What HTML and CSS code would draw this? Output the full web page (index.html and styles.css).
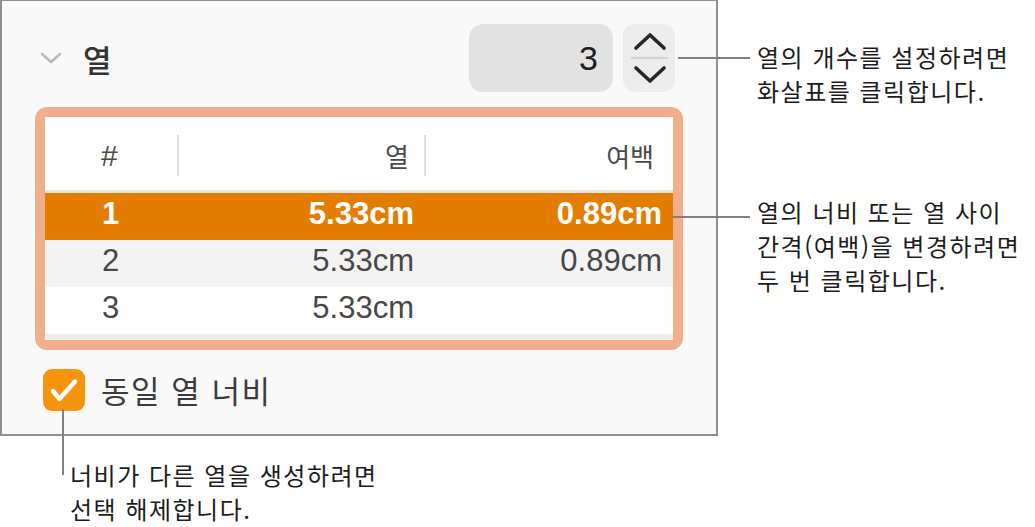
FILE: index.html
```html
<!DOCTYPE html>
<html lang="ko">
<head>
  <meta charset="UTF-8" />
  <meta name="viewport" content="width=device-width, initial-scale=1.0" />
  <title>열 설정</title>
  <link rel="stylesheet" href="styles.css">
</head>
<body>

  <div class="figure">
    <div class="left-col">

      <!-- Columns inspector panel -->
      <section class="panel">
        <div class="panel-head">
          <svg class="disclosure" width="22" height="12" viewBox="0 0 22 12">
            <path d="M2 2 L11 10 L20 2" fill="none" stroke="#b8b8b8" stroke-width="2.4" stroke-linecap="round" stroke-linejoin="round"/>
          </svg>
          <h2 class="panel-title">열</h2>
          <div class="count-field">3</div>
          <div class="stepper">
            <svg width="52" height="68" viewBox="0 0 52 68">
              <path d="M13 24 L27 11 L41 24" fill="none" stroke="#262626" stroke-width="3.6" stroke-linecap="round" stroke-linejoin="round"/>
              <line x1="8" y1="34" x2="45" y2="34" stroke="#d2d2d2" stroke-width="2"/>
              <path d="M13 44 L27 57 L41 44" fill="none" stroke="#262626" stroke-width="3.6" stroke-linecap="round" stroke-linejoin="round"/>
            </svg>
          </div>
        </div>

        <div class="table-frame">
          <div class="col-table">
            <div class="t-head">
              <div class="th th-num"><span>#</span></div>
              <div class="th th-width"><span>열</span></div>
              <div class="th th-gap"><span>여백</span></div>
            </div>
            <div class="t-row selected">
              <div class="td td-num">1</div>
              <div class="td td-width">5.33cm</div>
              <div class="td td-gap">0.89cm</div>
            </div>
            <div class="t-row alt">
              <div class="td td-num">2</div>
              <div class="td td-width">5.33cm</div>
              <div class="td td-gap">0.89cm</div>
            </div>
            <div class="t-row">
              <div class="td td-num">3</div>
              <div class="td td-width">5.33cm</div>
              <div class="td td-gap"></div>
            </div>
            <div class="t-foot"></div>
          </div>
        </div>

        <label class="check-row">
          <span class="checkbox">
            <svg width="42" height="42" viewBox="0 0 42 42">
              <path d="M10 22 L16.5 30 L32 12.5" fill="none" stroke="#fff" stroke-width="4.4" stroke-linecap="round" stroke-linejoin="round"/>
            </svg>
          </span>
          <span class="check-label">동일 열 너비</span>
        </label>
      </section>

      <div class="note note-bottom">
        <span class="leader leader-v"></span>
        <p>너비가 다른 열을 생성하려면<br>선택 해제합니다.</p>
      </div>
    </div>

    <div class="notes">
      <div class="note note-count">
        <span class="leader"></span>
        <p>열의 개수를 설정하려면<br>화살표를 클릭합니다.</p>
      </div>
      <div class="note note-table">
        <span class="leader"></span>
        <p>열의 너비 또는 열 사이<br>간격(여백)을 변경하려면<br>두 번 클릭합니다.</p>
      </div>
    </div>
  </div>

</body>
</html>
```

FILE: styles.css
```css
* {
  margin: 0;
  padding: 0;
  box-sizing: border-box;
}
body {
  background: #fff;
  font-family: 'Liberation Sans', 'Noto Sans CJK KR', sans-serif;
  color: #3c3c3c;
}
.figure {
  display: flex;
  align-items: flex-start;
  width: 1035px;
  height: 527px;
}
.left-col {
  width: 718px;
  flex-shrink: 0;
}

/* Panel */
.panel {
  width: 718px;
  height: 436px;
  background: #f9f9f9;
  border: 2px solid #8f8f8f;
  border-top-width: 1px;
  padding-top: 23px;
}
.panel-head {
  display: flex;
  align-items: center;
  height: 68px;
  padding: 0 41px 0 38px;
}
.disclosure {
  flex-shrink: 0;
}
.panel-title {
  flex: 1;
  margin-left: 21px;
  font-size: 31px;
  font-weight: 500;
  color: #333;
  font-family: 'Noto Sans CJK KR', sans-serif;
}
.count-field {
  width: 144px;
  height: 68px;
  border-radius: 14px;
  background: #e2e2e2;
  font-size: 34px;
  color: #1e1e1e;
  text-align: right;
  line-height: 68px;
  padding-right: 15px;
}
.stepper {
  width: 52px;
  height: 68px;
  margin-left: 10px;
  border-radius: 12px;
  background: #ececec;
}
.stepper svg {
  display: block;
}

/* Column table */
.table-frame {
  margin: 15px 33px 0;
  border: 10px solid #f2ae8b;
  border-radius: 12px;
}
.col-table {
  background: #fff;
  font-size: 31px;
  color: #474747;
}
.t-head,
.t-row {
  display: grid;
  grid-template-columns: 132px 247px 249px;
}
.t-head {
  height: 76px;
  padding-top: 18px;
  border-bottom: 3px solid #e7e7e7;
}
.th {
  height: 41px;
  display: flex;
  align-items: center;
  font-family: 'Noto Sans CJK KR', sans-serif;
  font-size: 26px;
  color: #4a4a4a;
}
.th-num {
  padding-left: 56px;
  font-family: 'Liberation Sans', sans-serif;
  font-size: 30px;
}
.th-width,
.th-gap {
  justify-content: flex-end;
  border-left: 2px solid #dedede;
}
.th-width {
  padding-right: 15px;
}
.th-gap {
  padding-right: 19px;
}
.t-row {
  height: 47px;
  line-height: 41px;
  padding-bottom: 6px;
}
.t-row.selected {
  background: #e27d00;
  color: #fff;
  font-weight: bold;
}
.t-row.alt {
  background: #f3f3f3;
}
.td-num {
  padding-left: 57px;
}
.td-width {
  text-align: right;
  padding-right: 10px;
}
.td-gap {
  text-align: right;
  padding-right: 11px;
}
.t-foot {
  height: 6px;
  background: #ededed;
}

/* Equal width checkbox */
.check-row {
  display: flex;
  align-items: center;
  margin-top: 17px;
  padding-left: 41px;
}
.checkbox {
  width: 42px;
  height: 42px;
  border-radius: 9px;
  background: #f7930c;
}
.checkbox svg {
  display: block;
}
.check-label {
  margin-left: 16px;
  font-family: 'Noto Sans CJK KR', sans-serif;
  font-size: 31px;
  letter-spacing: 1.5px;
  color: #3c3c3c;
}

/* Callouts */
.note {
  display: flex;
  align-items: flex-start;
}
.note p {
  font-family: 'Noto Sans CJK KR', sans-serif;
  font-size: 24px;
  letter-spacing: 1.5px;
  line-height: 34px;
  color: #1c1c1c;
  white-space: nowrap;
}
.leader {
  flex-shrink: 0;
  background: #808080;
  height: 2px;
}
.notes {
  padding-top: 40px;
}
.note-count .leader {
  width: 72px;
  margin: 17px 7px 0 -40px;
}
.note-table {
  margin-top: 87px;
}
.note-table .leader {
  width: 77px;
  margin: 21px 7px 0 -45px;
}
.leader-v {
  width: 2px;
  height: 66px;
  margin: -27px 0 0 62px;
}
.note-bottom p {
  margin: 22px 0 0 6px;
}
```
